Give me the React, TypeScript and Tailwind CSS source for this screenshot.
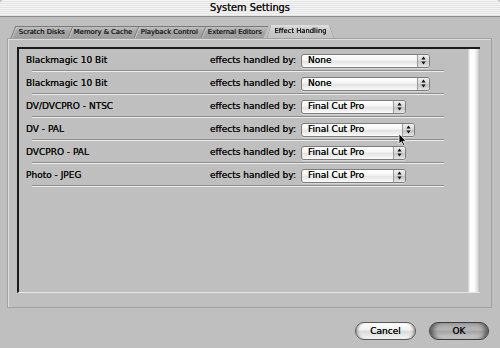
import React from "react";

const rows = [
  { label: "Blackmagic 10 Bit", value: "None", w: "w-[129px]" },
  { label: "Blackmagic 10 Bit", value: "None", w: "w-[129px]" },
  { label: "DV/DVCPRO - NTSC", value: "Final Cut Pro", w: "w-[105px]" },
  { label: "DV - PAL", value: "Final Cut Pro", w: "w-[114px]" },
  { label: "DVCPRO - PAL", value: "Final Cut Pro", w: "w-[105px]" },
  { label: "Photo - JPEG", value: "Final Cut Pro", w: "w-[105px]" },
];

const tabs = [
  { label: "Scratch Disks", w: "w-[57px]" },
  { label: "Memory & Cache", w: "w-[66px]" },
  { label: "Playback Control", w: "w-[67px]" },
  { label: "External Editors", w: "w-[63px]" },
];

function Arrows() {
  return (
    <svg width="5" height="9" viewBox="0 0 5 9">
      <polygon points="2.5,0.6 0.4,3.4 4.6,3.4" fill="#111" />
      <polygon points="0.4,5.6 4.6,5.6 2.5,8.4" fill="#111" />
    </svg>
  );
}

function Popup({ value, w }: { value: string; w: string }) {
  return (
    <div
      className={`${w} h-[14px] flex rounded-[3px] border border-[#7c7c7c] shadow-[0_1px_0_#d8d8d8] overflow-hidden bg-[linear-gradient(to_bottom,#ffffff_0%,#f6f6f6_40%,#e4e4e4_55%,#f2f2f2_85%,#ffffff_100%)]`}
    >
      <div className="flex-1 flex items-center pl-[6px] text-[9px] leading-none text-[#111] whitespace-nowrap [text-shadow:0_0_0.2px_#000]">
        {value}
      </div>
      <div className="w-[12px] flex items-center justify-center border-l border-[#9a9a9a] bg-[linear-gradient(to_bottom,#f0f0f0,#d6d6d6_50%,#c4c4c4_55%,#e6e6e6)]">
        <Arrows />
      </div>
    </div>
  );
}

export default function App() {
  return (
    <div className="w-[500px] h-[348px] bg-[#bfbfbf] overflow-hidden relative font-['DejaVu_Sans',sans-serif] text-[#111]">
      {/* Title bar */}
      <div className="h-[17px] border-b border-[#8c8c8c] rounded-t-[4px] bg-[repeating-linear-gradient(to_bottom,#f6f6f6_0px,#f6f6f6_1px,#e3e3e3_1px,#e3e3e3_2px)] flex items-center justify-center">
        <span className="text-[9.8px] text-[#1a1a1a] leading-none [text-shadow:0_0_0.2px_#000]">System Settings</span>
      </div>

      <div className="pl-[7px] pr-[8px] pt-[9px]">
        {/* Tabs */}
        <div className="flex items-end h-[12px] pl-[6px]">
          {tabs.map((t) => (
            <div
              key={t.label}
              className={`${t.w} h-[12px] skew-x-[-22deg] bg-[linear-gradient(to_bottom,#c0c0c0,#a6a6a6_40%,#9e9e9e)] border-t border-l border-[#7a7a7a] shadow-[inset_1px_0_0_#cfcfcf] flex items-center justify-center`}
            >
              <span className="skew-x-[22deg] text-[6.8px] leading-none text-[#222] whitespace-nowrap [text-shadow:0_0_0.2px_#222]">
                {t.label}
              </span>
            </div>
          ))}
          <div className="ml-[1px] [filter:drop-shadow(0_0_0.6px_#444)]">
            <div className="w-[67px] h-[13px] bg-[linear-gradient(to_bottom,#dedede,#c8c8c8_50%,#c2c2c2)] [clip-path:polygon(4px_0,calc(100%-5px)_0,100%_100%,0_100%)] flex items-center justify-center">
              <span className="text-[6.8px] leading-none text-[#111] whitespace-nowrap [text-shadow:0_0_0.2px_#111]">
                Effect Handling
              </span>
            </div>
          </div>
        </div>

        {/* Tab panel */}
        <div className="h-[270px] border border-[#a2a2a2] shadow-[inset_1px_1px_0_#dcdcdc] pt-[8px] pl-[9px] pr-[11px]">
          <div className="h-[246px] flex border-t-2 border-l-2 border-[#1a1a1a] border-b border-b-[#e6e6e6]">
            <div className="flex-1 pl-[7px] flex flex-col">
              {rows.map((r, i) => (
                <div key={i} className="h-[23px] flex flex-col">
                  <div className="h-[21px] pt-[2px] flex items-center">
                    <div className="w-[180px] text-[9px] leading-none whitespace-nowrap [text-shadow:0_0_0.2px_#000]">
                      {r.label}
                    </div>
                    <div className="w-[90px] text-[9px] leading-none text-right whitespace-nowrap [text-shadow:0_0_0.2px_#000]">
                      effects handled by:
                    </div>
                    <div className="ml-[5px]">
                      <Popup value={r.value} w={r.w} />
                    </div>
                  </div>
                  <div className="ml-[6px] w-[412px] h-[2px] border-t border-[#8e8e8e] border-b border-b-[#ececec]" />
                </div>
              ))}
            </div>
            <div className="w-[12px] h-full bg-[linear-gradient(to_right,#cfcfcf,#ffffff_20%,#ffffff_50%,#e4e4e4_75%,#b4b4b4)]" />
          </div>
        </div>
      </div>

      {/* Buttons */}
      <div className="flex justify-end gap-[13px] pr-[11px] mt-[14px]">
        <button className="w-[61px] h-[18px] rounded-full border border-[#5a5a5a] bg-[linear-gradient(to_bottom,#ffffff,#f2f2f2_40%,#dadada_55%,#f6f6f6)] shadow-[inset_3px_0_3px_-2px_#888,inset_-3px_0_3px_-2px_#888] text-[9px] leading-none text-[#111] flex items-center justify-center [text-shadow:0_0_0.3px_#000]">
          Cancel
        </button>
        <button className="w-[60px] h-[18px] rounded-full border border-[#3e3e3e] bg-[linear-gradient(to_bottom,#a6a6a6,#b6b6b6_40%,#a4a4a4_55%,#d2d2d2)] shadow-[inset_6px_0_5px_-3px_#555,inset_-6px_0_5px_-3px_#555] text-[9px] leading-none text-[#111] flex items-center justify-center [text-shadow:0_0_0.3px_#000]">
          OK
        </button>
      </div>

      {/* Mouse cursor */}
      <svg
        className="absolute left-[398px] top-[133px]"
        width="10"
        height="14"
        viewBox="0 0 10 14"
      >
        <path
          d="M1 0.8 L1 11 L3.4 8.8 L5.2 12.6 L6.8 11.9 L5 8.2 L8.2 8.2 Z"
          fill="#000"
          stroke="#fff"
          strokeWidth="0.8"
        />
      </svg>
    </div>
  );
}
